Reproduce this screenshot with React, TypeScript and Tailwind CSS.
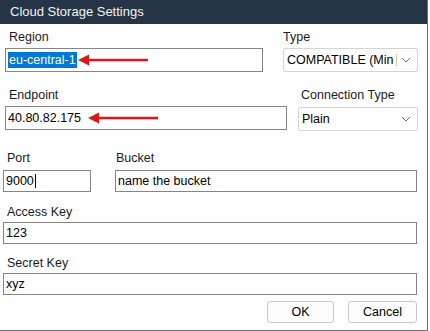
import React from 'react';

const font = "font-['Liberation_Sans',Arial,sans-serif]";

function Label({ children, className = '' }: { children: React.ReactNode; className?: string }) {
  return <div className={`h-[16px] text-[12.5px] leading-[16px] text-[#1a1a1a] ${className}`}>{children}</div>;
}

function TextBox({ children, className = '' }: { children?: React.ReactNode; className?: string }) {
  return (
    <div className={`flex items-center border border-[#858585] bg-white pl-[2px] text-[12.5px] text-black ${className}`}>
      {children}
    </div>
  );
}

function Chevron() {
  return (
    <svg width="10" height="6" viewBox="0 0 10 6" className="shrink-0">
      <path d="M1 1l4 4 4-4" fill="none" stroke="#6b6b6b" strokeWidth="1" />
    </svg>
  );
}

function Select({ value, className = '', clipped = false }: { value: string; className?: string; clipped?: boolean }) {
  return (
    <div className={`flex items-center rounded-[2px] border border-[#d4d4d4] bg-white pl-[3px] pr-[6px] text-[12.5px] text-black ${className}`}>
      <span className="whitespace-nowrap">{value}</span>
      {clipped && <span className="ml-[2px] h-[12px] w-px bg-[#e8c88a]" />}
      <span className="flex-1" />
      <Chevron />
    </div>
  );
}

function Arrow({ className }: { className: string }) {
  return (
    <svg width="72" height="12" viewBox="0 0 72 12" className={`absolute ${className}`}>
      <path d="M9 6H70" stroke="#e0161b" strokeWidth="2.5" />
      <path d="M0 6L11 0.5V11.5Z" fill="#e0161b" />
    </svg>
  );
}

function Button({ children, className = '' }: { children: React.ReactNode; className?: string }) {
  return (
    <div className={`flex h-[22px] items-center justify-center rounded-[3px] border border-[#c9c9c9] bg-[#fdfdfd] text-[12.5px] text-black ${className}`}>
      {children}
    </div>
  );
}

export default function App() {
  return (
    <div className={`relative h-[331px] w-[430px] overflow-hidden bg-white ${font}`}>
      <div className="flex h-[331px] w-[428px] flex-col border-b border-r border-[#6e6e6e]">
        <div className="flex h-[24px] items-center bg-[#263545] pl-[10px] text-[13px] text-[#f2f2f2]">
          Cloud Storage Settings
        </div>

        <div className="relative flex flex-1 flex-col pt-[5px]">
          {/* Region / Type */}
          <div className="flex">
            <div className="ml-[5px] flex w-[258px] flex-col gap-[3px]">
              <Label className="pl-[4px]">Region</Label>
              <TextBox className="h-[24px] pl-[1px]">
                <span className="bg-[#0078d7] px-[1px] leading-[16px] text-white">eu-central-1</span>
              </TextBox>
            </div>
            <div className="ml-[20px] flex w-[135px] flex-col gap-[3px]">
              <Label>Type</Label>
              <Select className="h-[24px]" value="COMPATIBLE (Min" clipped />
            </div>
          </div>

          {/* Endpoint / Connection Type */}
          <div className="mt-[15px] flex">
            <div className="ml-[5px] flex w-[282px] flex-col gap-[3px]">
              <Label className="pl-[4px]">Endpoint</Label>
              <TextBox className="h-[24px]">40.80.82.175</TextBox>
            </div>
            <div className="ml-[11px] flex w-[120px] flex-col gap-[4px]">
              <Label className="pl-[3px]">Connection Type</Label>
              <Select className="h-[24px]" value="Plain" />
            </div>
          </div>

          {/* Port / Bucket */}
          <div className="mt-[19px] flex">
            <div className="ml-[3px] flex w-[88px] flex-col gap-[4px]">
              <Label className="pl-[4px]">Port</Label>
              <TextBox className="h-[22px]">
                9000<span className="ml-px h-[14px] w-px bg-black" />
              </TextBox>
            </div>
            <div className="ml-[24px] flex w-[302px] flex-col gap-[4px]">
              <Label className="pl-[1px]">Bucket</Label>
              <TextBox className="h-[22px]">name the bucket</TextBox>
            </div>
          </div>

          {/* Access Key */}
          <div className="ml-[3px] mt-[12px] flex w-[414px] flex-col gap-[2px]">
            <Label className="pl-[4px]">Access Key</Label>
            <TextBox className="h-[22px]">123</TextBox>
          </div>

          {/* Secret Key */}
          <div className="ml-[3px] mt-[11px] flex w-[414px] flex-col gap-[2px]">
            <Label className="pl-[4px]">Secret Key</Label>
            <TextBox className="h-[22px]">xyz</TextBox>
          </div>

          <div className="mt-[6px] flex justify-end gap-[14px] pr-[10px]">
            <Button className="w-[67px]">OK</Button>
            <Button className="w-[69px]">Cancel</Button>
          </div>

          <Arrow className="left-[78px] top-[30px]" />
          <Arrow className="left-[88px] top-[88px]" />
        </div>
      </div>
    </div>
  );
}
